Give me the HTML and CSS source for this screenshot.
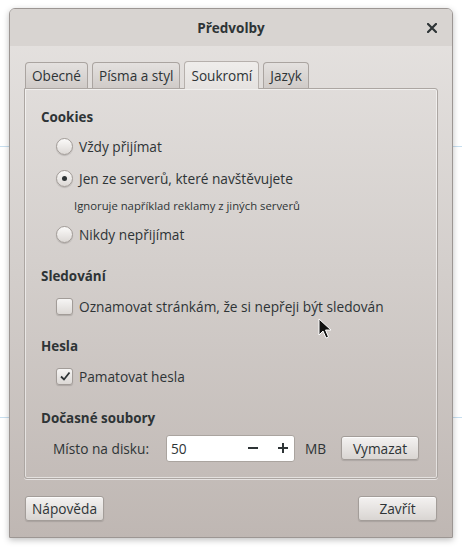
FILE: index.html
```html
<!DOCTYPE html>
<html lang="cs">
<head>
  <meta charset="UTF-8" />
  <title>Předvolby</title>
  <link rel="stylesheet" href="styles.css">
</head>
<body>
  <div class="window">
    <div class="titlebar">
      <span class="title">Předvolby</span>
      <span class="close">
        <svg width="10" height="10" viewBox="0 0 10 10"><path d="M1 1 L9 9 M9 1 L1 9" stroke="#2e3436" stroke-width="2.2" stroke-linecap="square"/></svg>
      </span>
    </div>

    <div class="content">
      <div class="tabs">
        <div class="tab">Obecné</div>
        <div class="tab">Písma a styl</div>
        <div class="tab active">Soukromí</div>
        <div class="tab">Jazyk</div>
      </div>

      <div class="panel">
        <div class="section cookies">
          <div class="heading">Cookies</div>
          <div class="row"><span class="radio"></span>Vždy přijímat</div>
          <div class="row"><span class="radio checked"></span>Jen ze serverů, které navštěvujete</div>
          <div class="hint">Ignoruje například reklamy z jiných serverů</div>
          <div class="row"><span class="radio"></span>Nikdy nepřijímat</div>
        </div>

        <div class="section tracking">
          <div class="heading">Sledování</div>
          <div class="row"><span class="check"></span>Oznamovat stránkám, že si nepřeji být sledován</div>
        </div>

        <div class="section passwords">
          <div class="heading">Hesla</div>
          <div class="row">
            <span class="check">
              <svg width="12" height="12" viewBox="0 0 12 12"><path d="M2 6.5 L5 9.5 L10.5 2.5" fill="none" stroke="#2e3436" stroke-width="1.8"/></svg>
            </span>Pamatovat hesla
          </div>
        </div>

        <div class="section cache">
          <div class="heading">Dočasné soubory</div>
          <div class="row disk">
            <span class="label">Místo na disku:</span>
            <div class="spin">
              <span class="value">50</span>
              <span class="spin-btn">
                <svg width="12" height="12" viewBox="0 0 12 12"><path d="M1 6 H11" stroke="#2e3436" stroke-width="2"/></svg>
              </span>
              <span class="spin-btn">
                <svg width="12" height="12" viewBox="0 0 12 12"><path d="M1 6 H11 M6 1 V11" stroke="#2e3436" stroke-width="2"/></svg>
              </span>
            </div>
            <span class="unit">MB</span>
            <button class="btn small">Vymazat</button>
          </div>
        </div>
      </div>

      <div class="actions">
        <button class="btn">Nápověda</button>
        <button class="btn">Zavřít</button>
      </div>
    </div>
  </div>

  <svg class="cursor" width="14" height="22" viewBox="0 0 14 22">
    <path d="M1 1 L1 17 L5 13 L8 20 L10.5 19 L7.5 12 L13 12 Z" fill="#111" stroke="#fff" stroke-width="1"/>
  </svg>
</body>
</html>
```

FILE: styles.css
```css
body {
  margin: 0;
  font-family: 'Open Sans', sans-serif;
  font-size: 13.7px;
  color: #2e3436;
  background-color: #fff;
  background-image:
    linear-gradient(to bottom, transparent 146px, #c7dff0 146px, #c7dff0 147px, transparent 147px),
    linear-gradient(to bottom, transparent 417px, #c7dff0 417px, #c7dff0 418px, transparent 418px);
  height: 547px;
  overflow: hidden;
  position: relative;
}
.window {
  margin: 8px 0 0 9px;
  width: 442px;
  height: 528px;
  border: 1px solid #9c9693;
  border-radius: 6px 6px 0 0;
  box-shadow: 0 2px 6px rgba(0, 0, 0, 0.25);
  display: flex;
  flex-direction: column;
  overflow: hidden;
  background: linear-gradient(to bottom, #e6e3e1 0%, #d3cecb 50%, #bfb7b3 100%);
}
.titlebar {
  height: 37px;
  flex: none;
  background: #d8d4d1;
  display: flex;
  align-items: center;
  justify-content: center;
  position: relative;
}
.title {
  font-weight: 700;
  font-size: 13.5px;
  color: #2e3436;
}
.close {
  position: absolute;
  right: 15px;
  top: 14px;
  line-height: 0;
}
.content {
  flex: 1;
  padding: 15px 14px 0 14px;
  display: flex;
  flex-direction: column;
}
.tabs {
  display: flex;
  gap: 4px;
  height: 27px;
  padding-left: 1px;
  position: relative;
  z-index: 1;
}
.tab {
  height: 26px;
  margin-top: 1px;
  padding: 0 6px;
  display: flex;
  align-items: center;
  border: 1px solid #aaa4a0;
  border-bottom: none;
  border-radius: 4px 4px 0 0;
  background: linear-gradient(to bottom, #e4e1df, #d0cbc8);
  box-sizing: border-box;
  font-size: 13.6px;
}
.tab.active {
  height: 28px;
  margin-top: 0;
  background: linear-gradient(to bottom, #efedeb, #e5e2e0);
  border-color: #b6b0ac;
}
.panel {
  height: 391px;
  box-sizing: border-box;
  border: 1px solid #aca6a2;
  border-radius: 0 3px 3px 3px;
  box-shadow: inset 0 0 0 1px rgba(255, 255, 255, 0.55), 0 1px 0 rgba(255, 255, 255, 0.6);
  padding: 18px 16px 0 16px;
}
.heading {
  height: 20px;
  line-height: 20px;
  font-weight: 700;
  font-size: 13.4px;
  margin-bottom: 4px;
}
.cookies .heading {
  margin-bottom: 3px;
}
.tracking {
  margin-top: 16px;
}
.passwords {
  margin-top: 14px;
}
.cache {
  margin-top: 16px;
}
.row {
  height: 32px;
  display: flex;
  align-items: center;
  padding-left: 15px;
  font-size: 13.7px;
}
.hint {
  height: 24px;
  line-height: 24px;
  padding-left: 33px;
  font-size: 11.3px;
}
.radio {
  width: 15px;
  height: 15px;
  border-radius: 50%;
  border: 1px solid #a29c98;
  background: linear-gradient(to bottom, #fbfaf9, #dcd8d5);
  box-shadow: 0 1px 1px rgba(0, 0, 0, 0.15);
  margin-right: 6px;
  display: flex;
  align-items: center;
  justify-content: center;
  flex: none;
}
.radio.checked::after {
  content: "";
  width: 5px;
  height: 5px;
  border-radius: 50%;
  background: #2e3436;
}
.check {
  width: 15px;
  height: 15px;
  border-radius: 3px;
  border: 1px solid #a29c98;
  background: linear-gradient(to bottom, #f6f5f4, #dcd8d5);
  box-shadow: 0 1px 1px rgba(0, 0, 0, 0.15);
  margin-right: 6px;
  display: flex;
  align-items: center;
  justify-content: center;
  line-height: 0;
  flex: none;
}
.disk {
  padding-left: 12px;
}
.label {
  width: 113px;
}
.spin {
  width: 129px;
  height: 27px;
  box-sizing: border-box;
  background: #fff;
  border: 1px solid #aaa49f;
  border-radius: 3px;
  display: flex;
  align-items: center;
  gap: 8px;
  padding-left: 4px;
}
.value {
  flex: 1;
}
.spin-btn {
  width: 22px;
  display: flex;
  justify-content: center;
  line-height: 0;
}
.unit {
  margin-left: 10px;
  width: 36px;
}
.btn {
  font-family: inherit;
  font-size: 13.7px;
  color: #2e3436;
  width: 79px;
  height: 25px;
  padding: 0;
  border: 1px solid #a39d99;
  border-radius: 3px;
  background: linear-gradient(to bottom, #f4f2f1, #d9d5d2);
  box-shadow: 0 1px 1px rgba(0, 0, 0, 0.12), inset 0 1px 0 rgba(255, 255, 255, 0.8);
}
.btn.small {
  width: 78px;
  height: 24px;
}
.actions {
  display: flex;
  justify-content: space-between;
  padding: 17px 1px 0 1px;
}
.cursor {
  position: absolute;
  left: 318px;
  top: 318px;
}
```
